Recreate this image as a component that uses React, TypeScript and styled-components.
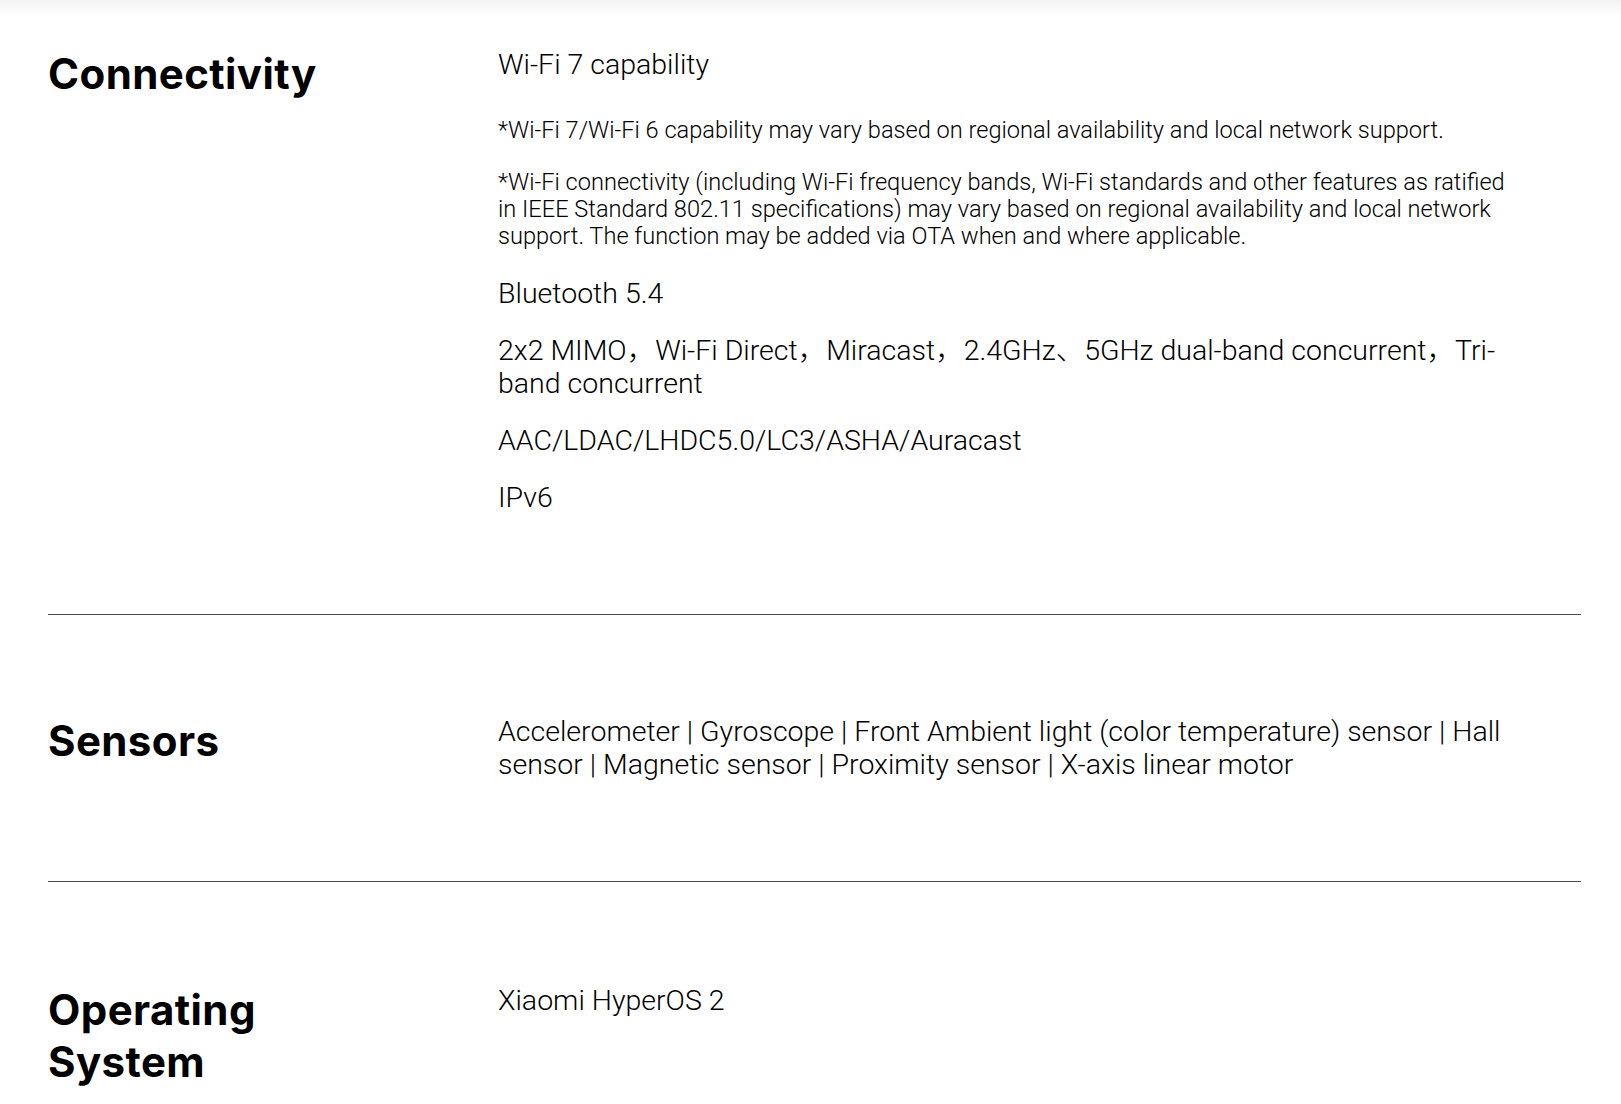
import React from "react";
import styled, { createGlobalStyle } from "styled-components";

const GlobalStyle = createGlobalStyle`
  body {
    margin: 0;
    background: #fff;
    color: #000;
    font-family: Roboto, "Noto Sans CJK SC", "Noto Sans", sans-serif;
  }
`;

const TopShade = styled.div`
  height: 16px;
  background: linear-gradient(to bottom, #f3f3f3, #fff);
`;

const Page = styled.main`
  padding: 0 40px 0 48px;
`;

const Section = styled.section<{ $top?: number; $last?: boolean }>`
  display: grid;
  grid-template-columns: 450px 1022px;
  align-items: start;
  padding: ${(p) => p.$top ?? 100}px 0 100px;
  border-bottom: ${(p) => (p.$last ? "none" : "1px solid #4d4d4d")};
`;

const Heading = styled.h2`
  margin: 0;
  font-family: Inter, "Noto Sans", sans-serif;
  font-weight: 700;
  font-size: 42px;
  line-height: 52px;
  letter-spacing: 0.4px;
  color: #000;
`;

const SpecList = styled.div`
  display: flex;
  flex-direction: column;
`;

const Spec = styled.p`
  margin: 0 0 24px;
  font-weight: 300;
  font-size: 28.5px;
  line-height: 33px;
  &:last-child {
    margin-bottom: 0;
  }
`;

const Notes = styled.div`
  display: flex;
  flex-direction: column;
  gap: 25px;
  margin: 12px 0 27px;
`;

const Note = styled.p`
  margin: 0;
  font-weight: 300;
  font-size: 23.6px;
  line-height: 27px;
`;

export default function App() {
  return (
    <>
      <GlobalStyle />
      <TopShade />
      <Page>
        <Section $top={32}>
          <Heading>Connectivity</Heading>
          <SpecList>
            <Spec>Wi-Fi 7 capability</Spec>
            <Notes>
              <Note>
                *Wi-Fi 7/Wi-Fi 6 capability may vary based on regional availability and local network support.
              </Note>
              <Note>
                *Wi-Fi connectivity (including Wi-Fi frequency bands, Wi-Fi standards and other features as ratified
                in IEEE Standard 802.11 specifications) may vary based on regional availability and local network
                support. The function may be added via OTA when and where applicable.
              </Note>
            </Notes>
            <Spec>Bluetooth 5.4</Spec>
            <Spec>
              2x2 MIMO，Wi-Fi Direct，Miracast，2.4GHz、5GHz dual-band concurrent，Tri-band concurrent
            </Spec>
            <Spec>AAC/LDAC/LHDC5.0/LC3/ASHA/Auracast</Spec>
            <Spec>IPv6</Spec>
          </SpecList>
        </Section>
        <Section>
          <Heading>Sensors</Heading>
          <SpecList>
            <Spec>
              Accelerometer | Gyroscope | Front Ambient light (color temperature) sensor | Hall sensor | Magnetic
              sensor | Proximity sensor | X-axis linear motor
            </Spec>
          </SpecList>
        </Section>
        <Section $top={102} $last>
          <Heading>
            Operating
            <br />
            System
          </Heading>
          <SpecList>
            <Spec>Xiaomi HyperOS 2</Spec>
          </SpecList>
        </Section>
      </Page>
    </>
  );
}
